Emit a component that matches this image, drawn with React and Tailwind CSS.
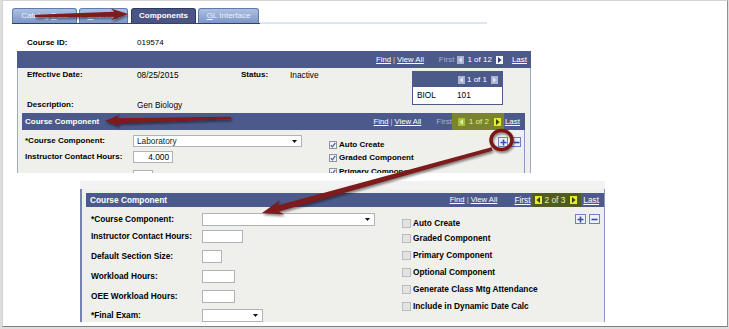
import React from 'react'

// small pager triangles inside the PeopleSoft nav bars
function Tri({ dir, fill }) {
  return (
    <svg width="5" height="6" viewBox="0 0 5 6">
      <path d={dir === 'l' ? 'M4 0 L0.5 3 L4 6 Z' : 'M1 0 L4.5 3 L1 6 Z'} fill={fill} />
    </svg>
  )
}

function PageBtn({ dir, tone }) {
  if (tone === 'on')
    return (
      <span className="inline-flex w-[7px] h-[8px] items-center justify-center bg-[#f3f4f8]">
        <Tri dir={dir} fill="#2f3b6b" />
      </span>
    )
  if (tone === 'hl')
    return (
      <span className="inline-flex w-[7px] h-[8px] items-center justify-center bg-[#e8eb2e]">
        <Tri dir={dir} fill="#3a3c10" />
      </span>
    )
  if (tone === 'hloff')
    return (
      <span className="inline-flex w-[7px] h-[8px] items-center justify-center bg-[#a7c03c]">
        <Tri dir={dir} fill="#e2eba6" />
      </span>
    )
  return (
    <span className="inline-flex w-[7px] h-[8px] items-center justify-center bg-[#a9b2d1]">
      <Tri dir={dir} fill="#d9deec" />
    </span>
  )
}

function FindViewAll() {
  return (
    <>
      <span className="ml-auto underline underline-offset-1 text-[7.7px]">Find</span>
      <span className="mx-[2px] text-[7.7px] text-[#d0d5e8]">|</span>
      <span className="underline underline-offset-1 text-[7.7px]">View All</span>
    </>
  )
}

function Tab({ active, className, children }) {
  if (active)
    return (
      <div className={`h-[15px] rounded-t-[3px] border border-b-0 border-[#2e3a66] bg-[#4a5583] text-white font-bold text-[8px] flex items-center justify-center ${className}`}>
        {children}
      </div>
    )
  return (
    <div className={`h-[15px] rounded-t-[3px] border border-b-0 border-[#6279ad] bg-gradient-to-b from-[#adc0e2] to-[#7c97c8] text-[#eef2fa] text-[8px] flex items-center justify-center ${className}`}>
      {children}
    </div>
  )
}

function Check({ on, label, big }) {
  if (on)
    return (
      <div className="flex items-center h-[12px]">
        <span className="w-[8px] h-[8px] border border-[#8f949c] bg-[#f2f3f6] flex items-center justify-center">
          <svg width="6" height="6" viewBox="0 0 6 6">
            <path d="M0.8 3.2 L2.4 4.8 L5.3 0.8" fill="none" stroke="#4b5fa1" strokeWidth="1.2" />
          </svg>
        </span>
        <span className="ml-[2px] font-bold text-[8px] text-black">{label}</span>
      </div>
    )
  return (
    <div className="flex items-center h-[12px]">
      <span className="w-[9px] h-[9px] border border-[#b9bcc2] bg-[#e2e3e3]" />
      <span className={`ml-[2px] font-bold text-black ${big ? 'text-[8.3px]' : 'text-[8px]'}`}>{label}</span>
    </div>
  )
}

function SelectBox({ className, children }) {
  return (
    <div className={`bg-white border border-[#aeb3bb] flex items-center pl-[3px] pr-[4px] text-[8.3px] text-[#222] ${className}`}>
      <span>{children}</span>
      <svg className="ml-auto" width="5" height="3" viewBox="0 0 5 3">
        <path d="M0 0 H5 L2.5 3 Z" fill="#111" />
      </svg>
    </div>
  )
}

function PlusMinus({ w }) {
  return (
    <div className="flex gap-[3px]">
      <span className={`${w} h-[10px] border border-[#6e80c0] bg-[#eef1fa] flex items-center justify-center`}>
        <svg width="7" height="7" viewBox="0 0 7 7">
          <path d="M3.5 0.5 V6.5 M0.5 3.5 H6.5" stroke="#3b4e97" strokeWidth="1.6" />
        </svg>
      </span>
      <span className={`${w} h-[10px] border border-[#6e80c0] bg-[#eef1fa] flex items-center justify-center`}>
        <svg width="7" height="7" viewBox="0 0 7 7">
          <path d="M0.5 3.5 H6.5" stroke="#3b4e97" strokeWidth="1.6" />
        </svg>
      </span>
    </div>
  )
}

function TopShot() {
  return (
    <div className="w-[528px] h-[172px] overflow-hidden shrink-0">
      {/* tabs */}
      <div className="flex items-end ml-[9px] mt-[7px]">
        <div className="flex items-end border-b border-[#34406c]">
          <Tab className="w-[65px]">
            Catalog&nbsp;<span className="underline">D</span>ata
          </Tab>
          <Tab className="w-[49px] ml-[2px]">
            <span className="underline">O</span>fferings
          </Tab>
          <Tab active className="w-[65px] ml-[3px]">
            Components
          </Tab>
          <Tab className="w-[61px] ml-[2px] mr-[1px]">
            <span className="underline">G</span>L Interface
          </Tab>
        </div>
        <div className="w-[227px] border-b-2 border-[#dbe5f2]" />
      </div>

      {/* course id */}
      <div className="flex items-center h-[10px] mt-[14px] ml-[24px] text-[8px]">
        <span className="w-[110px] font-bold">Course ID:</span>
        <span>019574</span>
      </div>

      {/* main panel */}
      <div className="mt-[3px] ml-[14px] w-[514px] flex flex-col">
        <div className="h-[17px] bg-[#4c5a8b] flex items-center pr-[4px] text-[8px] text-white">
          <FindViewAll />
          <span className="ml-[15px] text-[#a9b2d3]">First</span>
          <span className="ml-[3px] flex"><PageBtn dir="l" tone="off" /></span>
          <span className="ml-[3px]">1 of 12</span>
          <span className="ml-[4px] flex"><PageBtn dir="r" tone="on" /></span>
          <span className="ml-[9px] underline underline-offset-1">Last</span>
        </div>

        <div className="border-x border-[#9ea7c8] bg-[#eff0eb] h-[200px]">
          <div className="flex h-[45px]">
            <div className="w-[394px] pl-[9px] flex flex-col text-[8px]">
              <div className="flex items-center h-[12px] mt-[1px]">
                <span className="w-[110px] font-bold">Effective Date:</span>
                <span className="w-[104px] text-[8.3px]">08/25/2015</span>
                <span className="w-[49px] font-bold">Status:</span>
                <span className="text-[8.3px]">Inactive</span>
              </div>
              <div className="flex items-center h-[12px] mt-[18px]">
                <span className="w-[110px] font-bold">Description:</span>
                <span className="text-[8.3px]">Gen Biology</span>
              </div>
            </div>
            <div className="w-[91px] h-[34px] mt-[3px] border border-[#4c5a8b] bg-white flex flex-col">
              <div className="h-[15px] bg-[#4c5a8b] flex items-center justify-end pr-[4px] text-[8px] text-white">
                <PageBtn dir="l" tone="off" />
                <span className="ml-[2px]">1 of 1</span>
                <span className="ml-[4px] flex"><PageBtn dir="r" tone="off" /></span>
              </div>
              <div className="flex-1 flex items-center pl-[4px] text-[8.3px]">
                <span className="w-[40px]">BIOL</span>
                <span>101</span>
              </div>
            </div>
          </div>

          {/* course component section */}
          <div className="ml-[4px] w-[503px] flex flex-col">
            <div className="h-[17px] bg-[#4c5a8b] flex items-center pl-[3px] pr-[5px] text-[8px] text-white">
              <span className="font-bold">Course Component</span>
              <FindViewAll />
              <span className="ml-[15px] text-[#a9b2d3]">First</span>
              <span className="self-stretch pl-[6px] pr-[3px] bg-[#7a842f] flex items-center">
                <PageBtn dir="l" tone="hloff" />
                <span className="ml-[4px] text-[#eef08c]">1 of 2</span>
                <span className="ml-[5px] flex"><PageBtn dir="r" tone="hl" /></span>
              </span>
              <span className="ml-[1px] underline underline-offset-1">Last</span>
            </div>
            <div className="flex border-r border-[#8d98c2] h-[60px]">
              <div className="pl-[3px] flex flex-col text-[8px]">
                <div className="flex items-center h-[12px] mt-[5px]">
                  <span className="w-[108px] font-bold">*Course Component:</span>
                  <SelectBox className="w-[169px] h-[12px]">Laboratory</SelectBox>
                </div>
                <div className="flex items-center h-[12px] mt-[4px]">
                  <span className="w-[108px] font-bold">Instructor Contact Hours:</span>
                  <div className="w-[40px] h-[12px] bg-white border border-[#aeb3bb] flex items-center justify-end pr-[3px] text-[8.3px]">4.000</div>
                </div>
                <div className="flex items-center h-[12px] mt-[7px]">
                  <span className="w-[108px]" />
                  <div className="w-[20px] h-[12px] bg-white border border-[#aeb3bb]" />
                </div>
              </div>
              <div className="ml-[27px] flex flex-col mt-[9px]">
                <Check on label="Auto Create" />
                <div className="mt-[1px]"><Check on label="Graded Component" /></div>
                <div className="mt-[2px]"><Check on label="Primary Component" /></div>
              </div>
              <div className="ml-auto mr-[3px] mt-[7px]">
                <PlusMinus w="w-[10px]" />
              </div>
            </div>
          </div>
        </div>
      </div>
    </div>
  )
}

function BottomShot() {
  const label = 'font-bold text-[8.3px] w-[111px]'
  const box = 'h-[13px] bg-white border border-[#aeb3bb]'
  return (
    <div className="mt-[8px] ml-[77px] w-[525px] flex flex-col">
      <div className="h-[8px] bg-[#f2f2f2]" />
      <div className="h-[133px] overflow-hidden bg-[#eff0eb] border-l-2 border-[#7483b3] border-r border-r-[#8d98c2] pt-[4px] pl-[4px] flex flex-col">
        <div className="h-[15px] bg-[#4c5a8b] flex items-center pl-[4px] pr-[5px] text-[8.3px] text-white">
          <span className="font-bold">Course Component</span>
          <FindViewAll />
          <span className="ml-[17px] underline underline-offset-1">First</span>
          <span className="self-stretch ml-[1px] pl-[3px] pr-[4px] bg-[#505b1f] flex items-center">
            <PageBtn dir="l" tone="hl" />
            <span className="ml-[3px] text-[#f2f39a]">2 of 3</span>
            <span className="ml-[5px] flex"><PageBtn dir="r" tone="hl" /></span>
          </span>
          <span className="ml-[2px] underline underline-offset-1">Last</span>
        </div>

        <div className="flex">
          <div className="pl-[5px] flex flex-col">
            <div className="flex items-center mt-[6px]">
              <span className={label}>*Course Component:</span>
              <SelectBox className="w-[173px] h-[13px]" />
            </div>
            <div className="flex items-center mt-[4px]">
              <span className={label}>Instructor Contact Hours:</span>
              <div className={`${box} w-[41px]`} />
            </div>
            <div className="flex items-center mt-[7px]">
              <span className={label}>Default Section Size:</span>
              <div className={`${box} w-[20px]`} />
            </div>
            <div className="flex items-center mt-[7px]">
              <span className={label}>Workload Hours:</span>
              <div className={`${box} w-[33px]`} />
            </div>
            <div className="flex items-center mt-[7px]">
              <span className={label}>OEE Workload Hours:</span>
              <div className={`${box} w-[33px]`} />
            </div>
            <div className="flex items-center mt-[6px]">
              <span className={label}>*Final Exam:</span>
              <SelectBox className="w-[61px] h-[13px]" />
            </div>
          </div>

          <div className="ml-[27px] mt-[10px] flex flex-col">
            <Check big label="Auto Create" />
            <div className="mt-[3px]"><Check big label="Graded Component" /></div>
            <div className="mt-[5px]"><Check big label="Primary Component" /></div>
            <div className="mt-[5px]"><Check big label="Optional Component" /></div>
            <div className="mt-[5px]"><Check big label="Generate Class Mtg Attendance" /></div>
            <div className="mt-[5px]"><Check big label="Include in Dynamic Date Calc" /></div>
          </div>

          <div className="ml-auto mr-[4px] mt-[7px]">
            <PlusMinus w="w-[11px]" />
          </div>
        </div>
      </div>
    </div>
  )
}

function arrow(x1, y1, x2, y2, tail, shaft, headLen, headW) {
  const dx = x2 - x1
  const dy = y2 - y1
  const len = Math.hypot(dx, dy)
  const ux = dx / len
  const uy = dy / len
  const nx = -uy
  const ny = ux
  const bx = x2 - ux * headLen
  const by = y2 - uy * headLen
  const cx = x2 - ux * headLen * 0.8
  const cy = y2 - uy * headLen * 0.8
  const p = (x, y) => `${x.toFixed(1)},${y.toFixed(1)}`
  return [
    p(x1 + (nx * tail) / 2, y1 + (ny * tail) / 2),
    p(cx + (nx * shaft) / 2, cy + (ny * shaft) / 2),
    p(bx + (nx * headW) / 2, by + (ny * headW) / 2),
    p(x2, y2),
    p(bx - (nx * headW) / 2, by - (ny * headW) / 2),
    p(cx - (nx * shaft) / 2, cy - (ny * shaft) / 2),
    p(x1 - (nx * tail) / 2, y1 - (ny * tail) / 2),
  ].join(' ')
}

function Annotations() {
  return (
    <svg className="absolute left-0 top-0 pointer-events-none" width="729" height="329" viewBox="0 0 729 329">
      <defs>
        <filter id="sh" x="-20%" y="-60%" width="140%" height="220%">
          <feDropShadow dx="1" dy="2" stdDeviation="1.3" floodColor="#000" floodOpacity="0.45" />
        </filter>
      </defs>
      <polygon points={arrow(35, 16, 128, 14, 2.5, 5, 17, 12)} fill="#7c1a1a" filter="url(#sh)" />
      <polygon points={arrow(231, 118, 105, 121, 2.5, 5, 15, 12)} fill="#7c1a1a" filter="url(#sh)" />
      <polygon points={arrow(492, 149, 262, 213, 3.5, 6, 21, 15)} fill="#7c1a1a" filter="url(#sh)" />
      <ellipse cx="501.5" cy="140" rx="10.5" ry="9.5" fill="none" stroke="#7a1616" strokeWidth="3.5" filter="url(#sh)" />
    </svg>
  )
}

export default function App() {
  return (
    <div className="relative w-[729px] h-[329px] bg-[#dedede] overflow-hidden font-['Liberation_Sans',Arial,sans-serif] leading-none text-black">
      <div className="ml-[2px] w-[726px] h-[327px] bg-white border border-[#d3d3d3] border-r-[#8f8f8f] border-b-[#7f7f7f] flex flex-col">
        <TopShot />
        <BottomShot />
      </div>
      <Annotations />
    </div>
  )
}
